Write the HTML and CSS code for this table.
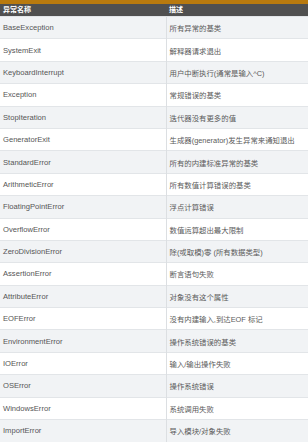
FILE: index.html
```html
<!DOCTYPE html>
<html lang="zh">
<head>
<meta charset="utf-8">
<link rel="stylesheet" href="styles.css">
</head>
<body>
<div class="topbar"></div>
<table class="tbl">
<thead>
<tr><th class="c1">异常名称</th><th class="c2">描述</th></tr>
</thead>
<tbody>
<tr><td>BaseException</td><td>所有异常的基类</td></tr>
<tr><td>SystemExit</td><td>解释器请求退出</td></tr>
<tr><td>KeyboardInterrupt</td><td>用户中断执行(通常是输入^C)</td></tr>
<tr><td>Exception</td><td>常规错误的基类</td></tr>
<tr><td>StopIteration</td><td>迭代器没有更多的值</td></tr>
<tr><td>GeneratorExit</td><td>生成器(generator)发生异常来通知退出</td></tr>
<tr><td>StandardError</td><td>所有的内建标准异常的基类</td></tr>
<tr><td>ArithmeticError</td><td>所有数值计算错误的基类</td></tr>
<tr><td>FloatingPointError</td><td>浮点计算错误</td></tr>
<tr><td>OverflowError</td><td>数值运算超出最大限制</td></tr>
<tr><td>ZeroDivisionError</td><td>除(或取模)零 (所有数据类型)</td></tr>
<tr><td>AssertionError</td><td>断言语句失败</td></tr>
<tr><td>AttributeError</td><td>对象没有这个属性</td></tr>
<tr><td>EOFError</td><td>没有内建输入,到达EOF 标记</td></tr>
<tr><td>EnvironmentError</td><td>操作系统错误的基类</td></tr>
<tr><td>IOError</td><td>输入/输出操作失败</td></tr>
<tr><td>OSError</td><td>操作系统错误</td></tr>
<tr><td>WindowsError</td><td>系统调用失败</td></tr>
<tr><td>ImportError</td><td>导入模块/对象失败</td></tr>
</tbody>
</table>
</body>
</html>
```
FILE: styles.css
```css
html, body {
  margin: 0;
  padding: 0;
  background: #ffffff;
}
body {
  width: 308px;
  height: 446px;
  overflow: hidden;
  font-family: "Liberation Sans", Arial, "Noto Sans CJK SC", sans-serif;
}
.topbar {
  height: 4px;
  background: #b97a0e;
}
.tbl {
  width: 308px;
  border-collapse: collapse;
  table-layout: fixed;
}
.tbl th {
  background: #505050;
  color: #ffffff;
  font-size: 7px;
  font-weight: bold;
  text-align: left;
  height: 12px;
  padding: 0 0 0 3px;
  line-height: 12px;
}
.tbl th.c1 { width: 163px; }
.tbl td {
  height: 22.4px;
  padding: 0 0 0 3px;
  font-size: 7.6px;
  color: #555555;
  border-top: 1px solid #e2e5e8;
  box-sizing: border-box;
  vertical-align: middle;
  white-space: nowrap;
  overflow: hidden;
}
.tbl td + td {
  border-left: 1px solid #dcdfe2;
  font-size: 7.4px;
  color: #5a5a5a;
}
.tbl tbody tr:nth-child(odd) td {
  background: #f1f3f5;
}
```
